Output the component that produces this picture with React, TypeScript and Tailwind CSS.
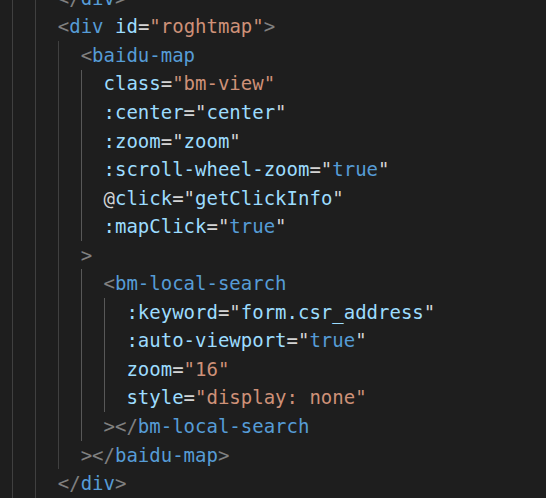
import React from "react";

type Tok = [string, string];

const C = {
  punct: "text-[#808080]",
  tag: "text-[#569cd6]",
  attr: "text-[#9cdcfe]",
  str: "text-[#ce9178]",
  plain: "text-[#d4d4d4]",
  kw: "text-[#569cd6]",
};

// level = indent depth (2 spaces each)
const lines: { level: number; toks: Tok[] }[] = [
  { level: 2, toks: [["</", C.punct], ["div", C.tag], [">", C.punct]] },
  {
    level: 2,
    toks: [
      ["<", C.punct],
      ["div", C.tag],
      [" ", C.plain],
      ["id", C.attr],
      ["=", C.plain],
      ['"roghtmap"', C.str],
      [">", C.punct],
    ],
  },
  { level: 3, toks: [["<", C.punct], ["baidu-map", C.tag]] },
  { level: 4, toks: [["class", C.attr], ["=", C.plain], ['"bm-view"', C.str]] },
  { level: 4, toks: [[":center", C.attr], ['="', C.plain], ["center", C.attr], ['"', C.plain]] },
  { level: 4, toks: [[":zoom", C.attr], ['="', C.plain], ["zoom", C.attr], ['"', C.plain]] },
  { level: 4, toks: [[":scroll-wheel-zoom", C.attr], ['="', C.plain], ["true", C.kw], ['"', C.plain]] },
  { level: 4, toks: [["@", C.plain], ["click", C.attr], ['="', C.plain], ["getClickInfo", C.attr], ['"', C.plain]] },
  { level: 4, toks: [[":mapClick", C.attr], ['="', C.plain], ["true", C.kw], ['"', C.plain]] },
  { level: 3, toks: [[">", C.punct]] },
  { level: 4, toks: [["<", C.punct], ["bm-local-search", C.tag]] },
  { level: 5, toks: [[":keyword", C.attr], ['="', C.plain], ["form.csr_address", C.attr], ['"', C.plain]] },
  { level: 5, toks: [[":auto-viewport", C.attr], ['="', C.plain], ["true", C.kw], ['"', C.plain]] },
  { level: 5, toks: [["zoom", C.attr], ["=", C.plain], ['"16"', C.str]] },
  { level: 5, toks: [["style", C.attr], ["=", C.plain], ['"display: none"', C.str]] },
  { level: 4, toks: [["></", C.punct], ["bm-local-search", C.tag]] },
  { level: 3, toks: [["></", C.punct], ["baidu-map", C.tag], [">", C.punct]] },
  { level: 2, toks: [["</", C.punct], ["div", C.tag], [">", C.punct]] },
];

const CodeLine = ({ level, toks }: { level: number; toks: Tok[] }) => (
  <div className="flex h-[28.56px] items-center whitespace-pre">
    {Array.from({ length: level }).map((_, i) => (
      <span
        key={i}
        className={
          "h-full w-[22.88px] shrink-0 border-l " +
          (i >= 3 ? "border-[#585858]" : "border-[#404040]")
        }
      />
    ))}
    <span className="leading-none">
      {toks.map(([t, cls], i) => (
        <span key={i} className={cls}>
          {t}
        </span>
      ))}
    </span>
  </div>
);

export default function App() {
  return (
    <div
      className="h-[498px] w-[546px] overflow-hidden bg-[#1e1e1e] pl-[12px] text-[19px]"
      style={{ fontFamily: '"DejaVu Sans Mono", "Liberation Mono", monospace' }}
    >
      <div className="-mt-[16px]">
        {lines.map((l, i) => (
          <CodeLine key={i} level={l.level} toks={l.toks} />
        ))}
      </div>
    </div>
  );
}
